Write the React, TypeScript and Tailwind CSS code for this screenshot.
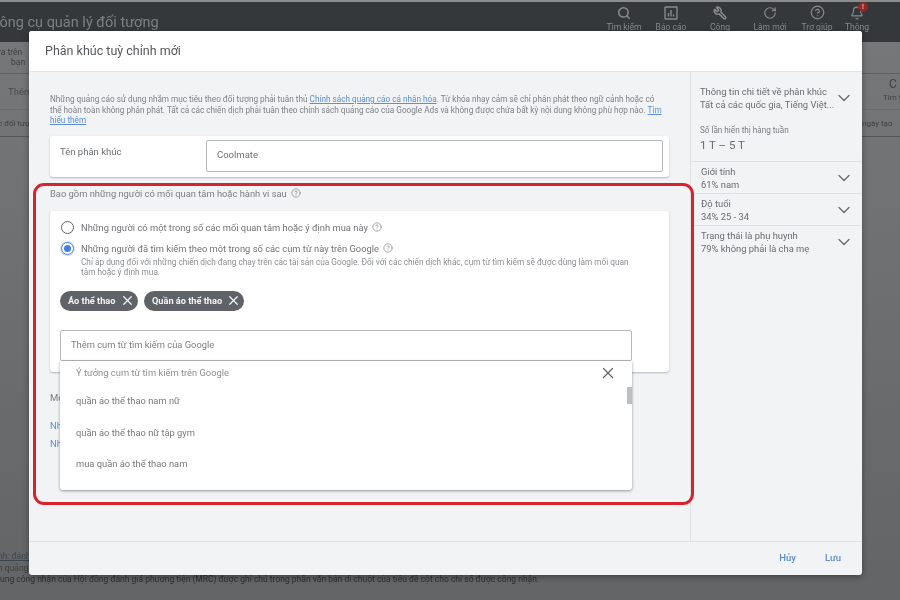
import { ChevronDown, X, Search, RotateCw, CircleHelp, Bell, Wrench } from "lucide-react";

const font = { fontFamily: "Roboto, 'Noto Sans', sans-serif" };

function ReportIcon({ size = 14 }: { size?: number }) {
  return (
    <svg width={size} height={size} viewBox="0 0 14 14" fill="none" stroke="currentColor" strokeWidth="1.4">
      <rect x="1" y="1" width="12" height="12" rx="0.5" />
      <path d="M4.5 10.5V7M7 10.5V4M9.5 10.5V8.5" />
    </svg>
  );
}

function ToolIcon({ size = 14 }: { size?: number }) {
  return <Wrench size={size} strokeWidth={2.6} className="-scale-x-100" />;
}

const topActions = [
  { label: "Tìm kiếm", icon: <Search size={14} strokeWidth={2.6} />, w: "w-[46px]" },
  { label: "Báo cáo", icon: <ReportIcon />, w: "w-[48px]" },
  { label: "Công", icon: <ToolIcon />, w: "w-[50px]" },
  { label: "Làm mới", icon: <RotateCw size={14} strokeWidth={2} />, w: "w-[50px]" },
  { label: "Trợ giúp", icon: <CircleHelp size={15} strokeWidth={2} />, w: "w-[44px]" },
  { label: "Thông", icon: <Bell size={14} strokeWidth={2} />, w: "w-[36px]" },
];

const insights = [
  { title: "Giới tính", value: "61% nam" },
  { title: "Độ tuổi", value: "34% 25 - 34" },
  { title: "Trạng thái là phụ huynh", value: "79% không phải là cha mẹ" },
];

const ideas = ["quần áo thể thao nam nữ", "quần áo thể thao nữ tập gym", "mua quần áo thể thao nam"];

function Help({ size = 10 }: { size?: number }) {
  return <CircleHelp size={size} strokeWidth={1.6} className="inline-block text-[#7b7e81] ml-1 align-[-1px]" />;
}

function Chip({ label, width }: { label: string; width: string }) {
  return (
    <div className={`${width} h-[20px] rounded-full bg-[#5f6368] flex items-center justify-between pl-[8px] pr-[3px] text-[#f4f4f4] text-[9.2px] font-bold`}>
      <span className="whitespace-nowrap">{label}</span>
      <X size={15} strokeWidth={2} className="shrink-0" />
    </div>
  );
}

function BackgroundPage() {
  return (
    <div className="w-[900px] h-[600px] overflow-hidden flex flex-col bg-[#6b6c6e]">
      <div className="h-[42px] shrink-0 bg-[#35383b] border-t-2 border-[#8a8c8e] flex items-start justify-between">
        <div className="text-[14.5px] text-[#7d8083] ml-[-10px] mt-[10px] whitespace-nowrap">Công cụ quản lý đối tượng</div>
        <div className="flex pr-[25px] pt-[3px]">
          {topActions.map((a) => (
            <div key={a.label} className={`${a.w} flex flex-col items-center text-[#878a8d] text-[8.5px] relative`}>
              <div className="h-[15px] flex items-center">{a.icon}</div>
              <span className="mt-[3px] leading-[9px] whitespace-nowrap">{a.label}</span>
              {a.label === "Thông" && (
                <span className="absolute left-[19px] top-[-3px] w-[10px] h-[10px] rounded-full bg-[#8e2a26] text-[#d9b4b0] text-[7px] leading-[10px] text-center font-bold">!</span>
              )}
            </div>
          ))}
        </div>
      </div>
      <div className="flex-1 flex justify-between bg-gradient-to-b from-[#767778] to-[#646567]">
        <div className="w-[29px] text-[#3f4042] overflow-hidden flex flex-col">
          <div className="h-[32px] border-b border-[#5d5e60] pt-[5px] text-[8.5px] leading-[10px] whitespace-nowrap">
            <div className="ml-[-2px]">ra trên</div>
            <div className="ml-[11px]">bạn</div>
          </div>
          <div className="h-[36px] border-b border-[#6a6b6d] pt-[11px] pl-[8px] text-[9.5px] whitespace-nowrap text-[#4a4b4d]">Thêm</div>
          <div className="h-[27px] border-b border-[#555658] pt-[8px] text-[8px] whitespace-nowrap ml-[-2px]">c đối tượng</div>
          <div className="mt-auto text-[8.5px] leading-[12px] whitespace-nowrap">
            <div className="text-[#3e4650] underline ml-[-2px]">nh: đánh</div>
            <div className="ml-[-2px]">n quảng c</div>
          </div>
        </div>
        <div className="w-[38px] overflow-hidden text-[#3f4042] flex flex-col">
          <div className="h-[32px] border-b border-[#5d5e60]" />
          <div className="h-[36px] border-b border-[#6a6b6d] whitespace-nowrap">
            <div className="pl-[27px] text-[12px] leading-[14px] pt-[3px]">C</div>
            <div className="pl-[21px] text-[8px] leading-[10px] mt-[2px]">Tìm t</div>
          </div>
          <div className="h-[27px] border-b border-[#555658] pt-[8px] text-[8px] whitespace-nowrap">ngày tạo</div>
        </div>
      </div>
      <div className="h-[26px] shrink-0 bg-[#646567] text-[8.5px] text-[#2e2f31] whitespace-nowrap overflow-hidden leading-[10px]">
        ung công nhận của Hội đồng đánh giá phương tiện (MRC) được ghi chú trong phần văn bản di chuột của tiêu đề cột cho chỉ số được công nhận.
      </div>
    </div>
  );
}

function InsightRow({ title, value }: { title: string; value: string }) {
  return (
    <div className="h-[32px] border-t border-[#dfe1e3] pl-[10px] pr-[8px] flex items-center justify-between text-[#6a6d70] text-[9.4px] leading-[13px]">
      <div className="whitespace-nowrap">
        <div>{title}</div>
        <div>{value}</div>
      </div>
      <ChevronDown size={20} strokeWidth={1.7} className="text-[#6f7275] shrink-0" />
    </div>
  );
}

export default function App() {
  return (
    <div className="w-[900px] h-[600px] overflow-hidden bg-[#646567]">
      <div className="relative w-[900px] h-[600px] overflow-hidden blur-[0.4px]" style={font}>
        <BackgroundPage />

        {/* Modal */}
        <div className="absolute left-[29px] top-[31px] w-[833px] h-[544px] rounded-[3px] overflow-hidden bg-[#f1f3f4] flex flex-col shadow-[0_2px_6px_rgba(0,0,0,0.35)]">
          <div className="h-[41px] shrink-0 bg-white border-b border-[#e2e4e6] pl-[16px] pt-[1px] flex items-center text-[12.5px] text-[#55585b]">
            Phân khúc tuỳ chỉnh mới
          </div>

          <div className="flex-1 flex min-h-0">
            {/* Left form */}
            <div className="w-[661px] shrink-0 pl-[21px] pr-[21px] pt-[22px]">
              <p className="text-[8.2px] leading-[10.5px] text-[#7f8285] whitespace-nowrap">
                Những quảng cáo sử dụng nhắm mục tiêu theo đối tượng phải tuân thủ{" "}
                <span className="text-[#5c8fd6] underline">Chính sách quảng cáo cá nhân hóa</span>. Từ khóa nhạy cảm sẽ chỉ phân phát theo ngữ cảnh hoặc có
                <br />
                thể hoàn toàn không phân phát. Tất cả các chiến dịch phải tuân theo chính sách quảng cáo của Google Ads và không được chứa bất kỳ nội dung không phù hợp nào.{" "}
                <span className="text-[#5c8fd6] underline">Tìm</span>
                <br />
                <span className="text-[#5c8fd6] underline">hiểu thêm</span>
              </p>

              <div className="mt-[10px] h-[41px] bg-white rounded-[3px] shadow-[0_1px_2px_rgba(0,0,0,0.25)] flex pl-[10px] pr-[6px] pt-[4px]">
                <div className="w-[146px] text-[9.5px] text-[#6c6f72] pt-[5px]">Tên phân khúc</div>
                <div className="flex-1 h-[32px] border border-[#b5b7ba] rounded-[2px] flex items-center pl-[10px] text-[9.5px] text-[#6c6f72]">Coolmate</div>
              </div>

              <div className="mt-[11px] text-[9.35px] leading-[12px] text-[#7a7d80]">
                Bao gồm những người có mối quan tâm hoặc hành vi sau<Help />
              </div>

              <div className="mt-[11px] h-[161px] bg-white rounded-[3px] shadow-[0_1px_2px_rgba(0,0,0,0.25)] pl-[10px] pt-[10px]">
                <div className="flex items-center h-[14px] pl-[1px] text-[9.35px] text-[#6f7275]">
                  <span className="w-[13px] h-[13px] rounded-full border-[1.5px] border-[#5f6368] shrink-0" />
                  <span className="ml-[7px] whitespace-nowrap">Những người có một trong số các mối quan tâm hoặc ý định mua này<Help /></span>
                </div>
                <div className="flex items-center h-[14px] mt-[7px] pl-[1px] text-[9.35px] text-[#6f7275]">
                  <span className="w-[13px] h-[13px] rounded-full border-[1.5px] border-[#3f7fe0] shrink-0 flex items-center justify-center ring-1 ring-[#cfe0f8]">
                    <span className="w-[7px] h-[7px] rounded-full bg-[#3f7fe0]" />
                  </span>
                  <span className="ml-[7px] whitespace-nowrap">Những người đã tìm kiếm theo một trong số các cụm từ này trên Google<Help /></span>
                </div>
                <p className="ml-[21px] mt-[1px] text-[8.25px] leading-[10.5px] text-[#8b8e91] whitespace-nowrap">
                  Chỉ áp dụng đối với những chiến dịch đang chạy trên các tài sản của Google. Đối với các chiến dịch khác, cụm từ tìm kiếm sẽ được dùng làm mối quan
                  <br />
                  tâm hoặc ý định mua.
                </p>
                <div className="flex gap-[6px] mt-[13px]">
                  <Chip label="Áo thể thao" width="w-[78px]" />
                  <Chip label="Quần áo thể thao" width="w-[100px]" />
                </div>
                <div className="mt-[19px] w-[572px] h-[31px] border border-[#b5b7ba] rounded-[2px] flex items-center pl-[10px] text-[9.35px] text-[#7c7f82]">
                  Thêm cụm từ tìm kiếm của Google
                </div>
              </div>

              <div className="mt-[19px] text-[9.5px] text-[#7a7d80]">Mở rộng</div>
              <div className="mt-[14px] text-[9.5px] text-[#5c8fd6]">Nhập thêm</div>
              <div className="mt-[4px] text-[9.5px] text-[#5c8fd6]">Nhập thêm</div>
            </div>

            {/* Right insights */}
            <div className="flex-1 border-l border-[#dfe1e3] min-w-0">
              <div className="h-[89px] pl-[9px] pr-[8px] pt-[13px]">
                <div className="flex items-center justify-between text-[9.4px] leading-[13px] text-[#6a6d70]">
                  <div className="whitespace-nowrap">
                    <div>Thông tin chi tiết về phân khúc</div>
                    <div>Tất cả các quốc gia, Tiếng Việt...</div>
                  </div>
                  <ChevronDown size={20} strokeWidth={1.7} className="text-[#6f7275] shrink-0" />
                </div>
                <div className="mt-[14px] text-[8.15px] leading-[11px] text-[#7a7d80]">Số lần hiển thị hàng tuần</div>
                <div className="mt-[2px] text-[11.5px] leading-[15px] text-[#6a6d70]">1 T – 5 T</div>
              </div>
              {insights.map((i) => (
                <InsightRow key={i.title} title={i.title} value={i.value} />
              ))}
            </div>
          </div>

          <div className="h-[34px] shrink-0 border-t border-[#dfe1e3] flex items-center justify-end gap-[29px] pr-[21px] text-[9.5px] font-medium text-[#5c8bc9]">
            <span>Hủy</span>
            <span>Lưu</span>
          </div>
        </div>

        {/* Suggestion dropdown */}
        <div className="absolute left-[60px] top-[361px] w-[572px] h-[129px] bg-white rounded-b-[3px] shadow-[0_1px_3px_rgba(0,0,0,0.4)] overflow-hidden text-[9.35px] text-[#75787b]">
          <div className="h-[24.5px] pl-[16px] pr-[15px] flex items-center justify-between text-[#8b8e91]">
            <span>Ý tưởng cụm từ tìm kiếm trên Google</span>
            <X size={18} strokeWidth={1.6} className="text-[#5f6368]" />
          </div>
          {ideas.map((idea) => (
            <div key={idea} className="h-[31.5px] pl-[16px] flex items-center">{idea}</div>
          ))}
          <span className="absolute right-0 top-[26px] w-[5px] h-[17px] bg-[#bcbec0]" />
        </div>

        {/* Red highlight */}
        <div className="absolute left-[33px] top-[183px] w-[661px] h-[322px] rounded-[11px] border-[3px] border-[#d8232f] pointer-events-none" />
      </div>
    </div>
  );
}
